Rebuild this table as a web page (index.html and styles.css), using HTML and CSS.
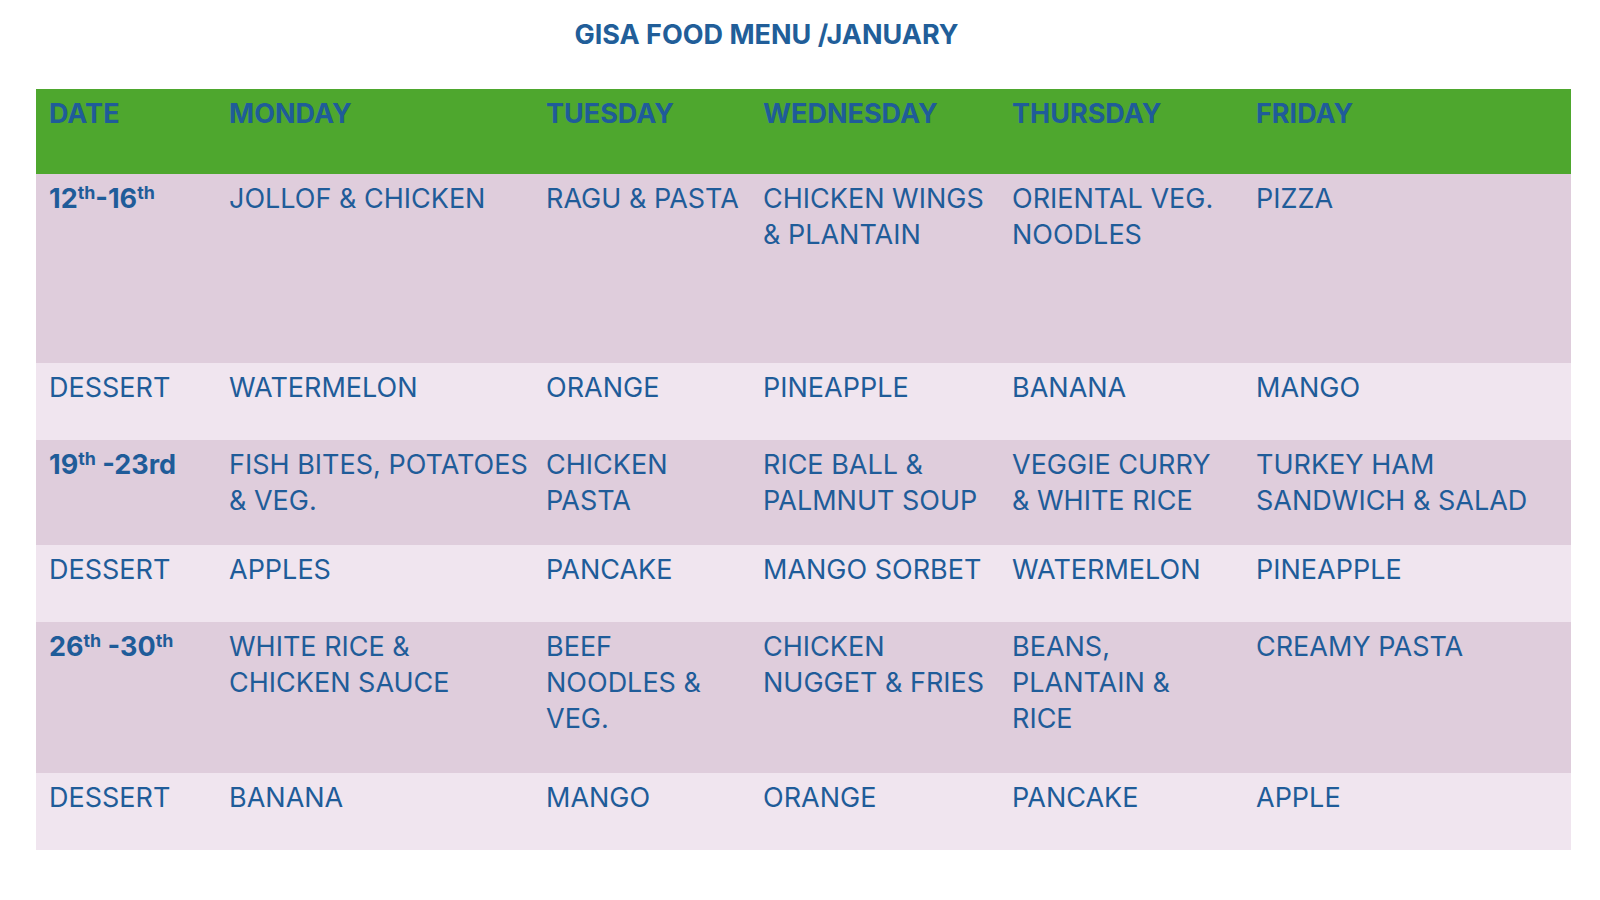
FILE: index.html
```html
<!DOCTYPE html>
<html lang="en">
<head>
<meta charset="utf-8">
<title>GISA FOOD MENU /JANUARY</title>
<link rel="stylesheet" href="styles.css">
</head>
<body>
<main class="page">
  <h1 class="title">GISA FOOD MENU /JANUARY</h1>
  <table class="menu">
    <colgroup>
      <col class="c-date"><col class="c-mon"><col class="c-tue"><col class="c-wed"><col class="c-thu"><col class="c-fri">
    </colgroup>
    <thead>
      <tr class="head">
        <th>DATE</th><th>MONDAY</th><th>TUESDAY</th><th>WEDNESDAY</th><th>THURSDAY</th><th>FRIDAY</th>
      </tr>
    </thead>
    <tbody>
      <tr class="week week-1">
        <td class="date">12<sup>th</sup>-16<sup>th</sup></td>
        <td>JOLLOF &amp; CHICKEN</td>
        <td>RAGU &amp; PASTA</td>
        <td>CHICKEN WINGS<br>&amp; PLANTAIN</td>
        <td>ORIENTAL VEG.<br>NOODLES</td>
        <td>PIZZA</td>
      </tr>
      <tr class="dessert">
        <td>DESSERT</td><td>WATERMELON</td><td>ORANGE</td><td>PINEAPPLE</td><td>BANANA</td><td>MANGO</td>
      </tr>
      <tr class="week week-2">
        <td class="date">19<sup>th</sup> -23rd</td>
        <td>FISH BITES, POTATOES<br>&amp; VEG.</td>
        <td>CHICKEN<br>PASTA</td>
        <td>RICE BALL &amp;<br>PALMNUT SOUP</td>
        <td>VEGGIE CURRY<br>&amp; WHITE RICE</td>
        <td>TURKEY HAM<br>SANDWICH &amp; SALAD</td>
      </tr>
      <tr class="dessert">
        <td>DESSERT</td><td>APPLES</td><td>PANCAKE</td><td>MANGO SORBET</td><td>WATERMELON</td><td>PINEAPPLE</td>
      </tr>
      <tr class="week week-3">
        <td class="date">26<sup>th</sup> -30<sup>th</sup></td>
        <td>WHITE RICE &amp;<br>CHICKEN SAUCE</td>
        <td>BEEF<br>NOODLES &amp;<br>VEG.</td>
        <td>CHICKEN<br>NUGGET &amp; FRIES</td>
        <td>BEANS,<br>PLANTAIN &amp;<br>RICE</td>
        <td>CREAMY PASTA</td>
      </tr>
      <tr class="dessert">
        <td>DESSERT</td><td>BANANA</td><td>MANGO</td><td>ORANGE</td><td>PANCAKE</td><td>APPLE</td>
      </tr>
    </tbody>
  </table>
</main>
</body>
</html>
```
FILE: styles.css
```css
html, body {
  margin: 0;
  padding: 0;
  background: #ffffff;
}

.page {
  padding: 19px 29px 0 36px;
  font-family: Inter, "Noto Sans", "Liberation Sans", sans-serif;
  color: #1f5c99;
}

.title {
  margin: 0 0 39px 0;
  padding-right: 74px;
  text-align: center;
  font-size: 27px;
  line-height: 31px;
  font-weight: 700;
  color: #215e99;
}

.menu {
  width: 1535px;
  border-collapse: collapse;
  table-layout: fixed;
  font-size: 27px;
  line-height: 36px;
}

.c-date { width: 180px; }
.c-mon { width: 317px; }
.c-tue { width: 217px; }
.c-wed { width: 249px; }
.c-thu { width: 244px; }
.c-fri { width: 328px; }

.menu th,
.menu td {
  padding: 7px 4px 0 13px;
  text-align: left;
  vertical-align: top;
  font-weight: 400;
  white-space: nowrap;
}

.menu th {
  font-weight: 700;
}

.head {
  background: #4ea72e;
  height: 85px;
}

.week {
  background: #dfcddc;
}

.dessert {
  background: #f0e5ef;
  height: 77px;
}

.week-1 { height: 189px; }
.week-2 { height: 105px; }
.week-3 { height: 151px; }

.menu td.date {
  font-weight: 700;
}

.menu sup {
  font-size: 0.66em;
  line-height: 0;
  vertical-align: 0.5em;
}
```
